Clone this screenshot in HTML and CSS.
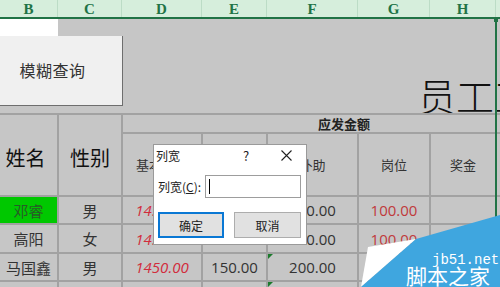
FILE: index.html
```html
<!DOCTYPE html>
<html lang="zh">
<head>
<meta charset="utf-8">
<link rel="stylesheet" href="styles.css">
</head>
<body>
<div class="app">
  <div class="colhead">
    <div class="ch w-b">B</div>
    <div class="ch w-c">C</div>
    <div class="ch w-d">D</div>
    <div class="ch w-e">E</div>
    <div class="ch w-f">F</div>
    <div class="ch w-g">G</div>
    <div class="ch w-h">H</div>
    <div class="ch w-i"></div>
  </div>
  <div class="top">
    <div class="active-cell"></div>
    <div class="title">员工工资表</div>
  </div>
  <div class="grid">
    <div class="c name-h">姓名</div>
    <div class="c sex-h">性别</div>
    <div class="c pay-h">应发金额</div>
    <div class="c i-a"></div>
    <div class="c sub">基本工资</div>
    <div class="c sub"></div>
    <div class="c sub">补助</div>
    <div class="c sub">岗位</div>
    <div class="c sub">奖金</div>
    <div class="c"></div>

    <div class="c name hl">邓睿</div>
    <div class="c">男</div>
    <div class="c red-i">1450.00</div>
    <div class="c num">150.00</div>
    <div class="c num">200.00</div>
    <div class="c red">100.00</div>
    <div class="c"></div>
    <div class="c"></div>

    <div class="c name">高阳</div>
    <div class="c">女</div>
    <div class="c red-i">1450.00</div>
    <div class="c num">150.00</div>
    <div class="c num">200.00</div>
    <div class="c red">100.00</div>
    <div class="c"></div>
    <div class="c"></div>

    <div class="c name">马国鑫</div>
    <div class="c">男</div>
    <div class="c red-i">1450.00</div>
    <div class="c num">150.00</div>
    <div class="c num flag">200.00</div>
    <div class="c"></div>
    <div class="c"></div>
    <div class="c"></div>

    <div class="c"></div>
    <div class="c"></div>
    <div class="c"></div>
    <div class="c"></div>
    <div class="c flag"></div>
    <div class="c"></div>
    <div class="c"></div>
    <div class="c"></div>
  </div>

  <button class="macro">模糊查询</button>
  <div class="selection"></div>

  <div class="dialog">
    <div class="dlg-title">
      <span class="dlg-name">列宽</span>
      <span class="dlg-help">?</span>
      <span class="dlg-close">
        <svg width="11" height="11" viewBox="0 0 11 11"><path d="M0.5 0.5 L10.5 10.5 M10.5 0.5 L0.5 10.5" stroke="#222" stroke-width="1.1" fill="none"/></svg>
      </span>
    </div>
    <div class="dlg-row">
      <span class="dlg-label">列宽(<u>C</u>):</span>
      <div class="dlg-input"><span class="caret"></span></div>
    </div>
    <div class="dlg-buttons">
      <div class="btn primary">确定</div>
      <div class="btn">取消</div>
    </div>
  </div>

  <svg class="watermark" width="142" height="75" viewBox="358 212 142 75">
    <polygon points="368,247 416,239 361,287" fill="#ffffff"/>
    <polygon points="500,215 500,287 361,287 416,239" fill="#3fa6df"/>
    <text x="432" y="264" font-family="Liberation Mono, monospace" font-size="14" fill="#ffffff">jb51.net</text>
    <text x="406" y="284" font-family="Noto Sans CJK SC, sans-serif" font-size="21" fill="#ffffff">脚本之家</text>
  </svg>
</div>
</body>
</html>
```

FILE: styles.css
```css
html, body {
  margin: 0;
  padding: 0;
}
body {
  width: 500px;
  height: 287px;
  overflow: hidden;
  background: #c6c6c6;
  font-family: "Noto Sans CJK SC", "Noto Sans", sans-serif;
}
.app {
  position: relative;
  width: 500px;
  height: 287px;
  overflow: hidden;
}
.colhead {
  display: flex;
  height: 17px;
  background: #d6eedc;
  border-bottom: 2px solid #217346;
}
.ch {
  box-sizing: border-box;
  border-right: 1px solid #bcdcc6;
  color: #217346;
  font-family: "Liberation Serif", "DejaVu Serif", serif;
  font-weight: bold;
  font-size: 15px;
  line-height: 18px;
  text-align: center;
}
.w-b { width: 58px; }
.w-c { width: 64px; }
.w-d { width: 80px; }
.w-e { width: 65px; }
.w-f { width: 91px; }
.w-g { width: 72px; }
.w-h { width: 66px; }
.w-i { flex: 1; border-right: none; }

.top {
  height: 94px;
  display: flex;
  flex-direction: column;
  background: #c6c6c6;
}
.active-cell {
  width: 58px;
  height: 17px;
  background: #ffffff;
}
.title {
  margin-top: auto;
  padding-left: 418px;
  font-size: 38px;
  line-height: 40px;
  height: 38px;
  color: #111;
  font-weight: 300;
  white-space: nowrap;
  overflow: hidden;
}

.grid {
  display: grid;
  grid-template-columns: 57px 62px 78px 63px 89px 70px 64px 1fr;
  grid-template-rows: 17px 61px 26px 27px 26px 26px;
  gap: 2px;
  padding-top: 2px;
  background: #a2a2a2;
}
.c {
  background: #c6c6c6;
  display: flex;
  align-items: center;
  justify-content: center;
  font-size: 15px;
  color: #333;
  white-space: nowrap;
  overflow: hidden;
  position: relative;
}
.name-h, .sex-h {
  grid-row: span 2;
  font-size: 20px;
  color: #111;
  padding-top: 4px;
  box-sizing: border-box;
}
.name-h { padding-right: 6px; }
.pay-h {
  grid-column: span 5;
  font-weight: bold;
  font-size: 13px;
  color: #222;
  justify-content: flex-start;
  padding-left: 195px;
}
.sub {
  font-size: 13px;
  color: #333;
}
.name { font-size: 15px; color: #333; }
.hl { background: #00c800; color: #275c27; }
.num { font-family: "Open Sans", "Noto Sans", sans-serif; font-size: 15px; color: #333; }
.red { font-family: "Open Sans", "Noto Sans", sans-serif; font-size: 15px; color: #c0393b; }
.red-i { font-family: "Open Sans", "Noto Sans", sans-serif; font-size: 15px; color: #d22c3c; font-style: italic; }
.flag::before {
  content: "";
  position: absolute;
  left: 0;
  top: 0;
  border-top: 5px solid #1c7a2c;
  border-right: 5px solid transparent;
}

.macro {
  position: absolute;
  left: 0;
  top: 36px;
  width: 123px;
  height: 70px;
  margin: 0;
  padding: 0 17px 2px 0;
  background: #f0f0f0;
  border: none;
  border-right: 1px solid #6e6e6e;
  border-bottom: 1px solid #6e6e6e;
  font-family: "Noto Sans CJK SC", sans-serif;
  font-size: 16px;
  color: #333;
  letter-spacing: 0.5px;
}

.selection {
  position: absolute;
  left: 495px;
  top: 17px;
  width: 2px;
  height: 280px;
  background: #217346;
}
.selection::before {
  content: "";
  position: absolute;
  left: -1px;
  top: 1px;
  width: 4px;
  height: 4px;
  background: #217346;
}

.dialog {
  position: absolute;
  left: 153px;
  top: 144px;
  width: 154px;
  height: 101px;
  box-sizing: border-box;
  background: #ffffff;
  border: 1px solid #9a9a9a;
  font-size: 12px;
  color: #222;
  display: flex;
  flex-direction: column;
}
.dlg-title {
  height: 21px;
  display: flex;
  align-items: center;
  padding-left: 2px;
}
.dlg-name { width: 87px; }
.dlg-help { width: 38px; font-size: 13px; }
.dlg-close { display: flex; }
.dlg-row {
  display: flex;
  align-items: center;
  margin-top: 9px;
  padding-left: 4px;
}
.dlg-label { width: 47px; }
.dlg-input {
  width: 96px;
  height: 23px;
  box-sizing: border-box;
  border: 1px solid #9d9d9d;
  position: relative;
}
.caret {
  position: absolute;
  left: 3px;
  top: 3px;
  width: 1px;
  height: 15px;
  background: #000;
}
.dlg-buttons {
  display: flex;
  gap: 10px;
  margin-top: 14px;
  padding-left: 4px;
}
.btn {
  width: 67px;
  height: 26px;
  box-sizing: border-box;
  background: #e1e1e1;
  border: 1px solid #adadad;
  display: flex;
  align-items: center;
  justify-content: center;
  font-size: 12px;
}
.btn.primary {
  width: 66px;
  border: 2px solid #0a78d4;
}
.watermark {
  position: absolute;
  left: 358px;
  top: 212px;
}
```
